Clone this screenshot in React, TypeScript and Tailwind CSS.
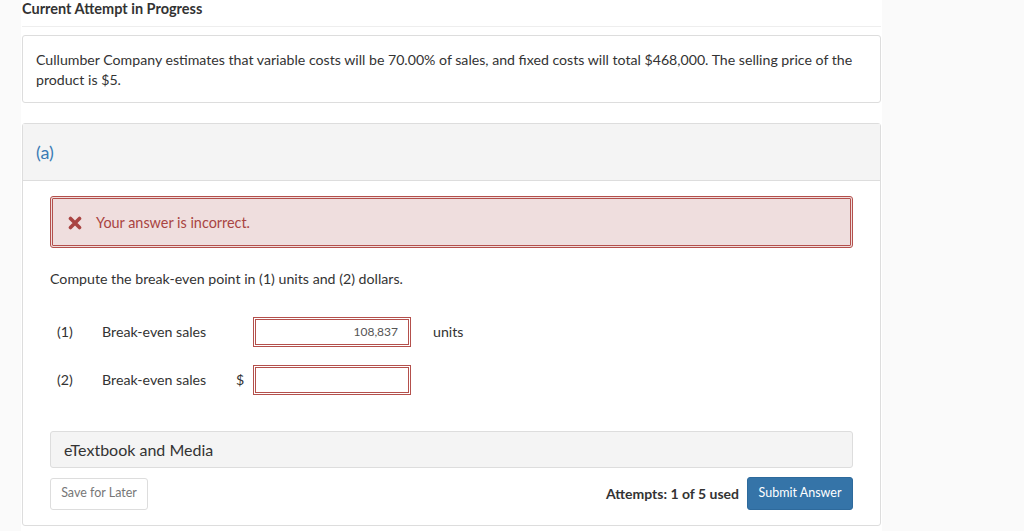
const font = { fontFamily: 'Lato, "Open Sans", Arial, sans-serif' };

function AnswerRow({ num, label, prefix, value, suffix }: { num: string; label: string; prefix?: string; value: string; suffix?: string }) {
  return (
    <div className="flex items-center h-[30px] text-[14.2px] text-[#333]">
      <span className="w-[52px] pl-[7px]">{num}</span>
      <span className="w-[134px]">{label}</span>
      <span className="w-[17px]">{prefix}</span>
      <div className="w-[158px] h-[30px] border-[3px] border-double border-[#b4504c] bg-white flex items-center justify-end pr-[10px] text-[12px] text-[#555]">
        {value}
      </div>
      {suffix && <span className="ml-[22px]">{suffix}</span>}
    </div>
  );
}

export default function App() {
  return (
    <div className="min-h-screen bg-[#fafafa]" style={font}>
      <div className="ml-[21px] w-[861px] min-h-[531px] bg-white px-px">
        <div className="h-[27px] border-b border-[#eeeeee] text-[14.5px] font-bold text-[#333] leading-[17px]">
          Current Attempt in Progress
        </div>

        <div className="mt-[8px] border border-[#dddddd] rounded-[3px] px-[13px] pt-[14px] pb-[12px] text-[14.15px] leading-[20px] text-[#333]">
          Cullumber Company estimates that variable costs will be 70.00% of sales, and fixed costs will total $468,000. The selling price of the product is $5.
        </div>

        <div className="mt-[20px] border border-[#dddddd] rounded-[3px]">
          <div className="h-[57px] bg-[#f4f4f4] border-b border-[#dddddd] flex items-center px-[13px] text-[18px] text-[#3a7bb5]">
            (a)
          </div>

          <div className="px-[27px] pt-[15px] pb-[15px]">
            <div className="h-[52px] border-[3px] border-double border-[#b4504c] rounded-[3px] bg-[#efdede] flex items-center pl-[15px] pt-px text-[14.4px] text-[#a94442]">
              <svg width="14" height="14" viewBox="0 0 14 14" className="shrink-0">
                <path d="M2.5 2.5 L11.5 11.5 M11.5 2.5 L2.5 11.5" stroke="#a94442" strokeWidth="3.6" strokeLinecap="round" />
              </svg>
              <span className="ml-[14px]">Your answer is incorrect.</span>
            </div>

            <p className="mt-[21px] text-[14.2px] leading-[20px] text-[#333]">
              Compute the break-even point in (1) units and (2) dollars.
            </p>

            <div className="mt-[28px] flex flex-col gap-[18px]">
              <AnswerRow num="(1)" label="Break-even sales" value="108,837" suffix="units" />
              <AnswerRow num="(2)" label="Break-even sales" prefix="$" value="" />
            </div>

            <div className="mt-[36px] h-[37px] bg-[#f4f4f4] border border-[#dddddd] rounded-[3px] flex items-center px-[13px] text-[16px] text-[#333]">
              eTextbook and Media
            </div>

            <div className="mt-[9px] flex items-center justify-between">
              <button className="h-[32px] w-[98px] border border-[#dddddd] rounded-[3px] bg-white text-[12.5px] text-[#777]">
                Save for Later
              </button>
              <div className="flex items-center gap-[8px]">
                <span className="text-[14px] font-bold text-[#333]">Attempts: 1 of 5 used</span>
                <button className="h-[33px] w-[106px] rounded-[3px] bg-[#3574a8] border border-[#2e6a9c] text-[12.5px] text-white">
                  Submit Answer
                </button>
              </div>
            </div>
          </div>
        </div>
      </div>
    </div>
  );
}
